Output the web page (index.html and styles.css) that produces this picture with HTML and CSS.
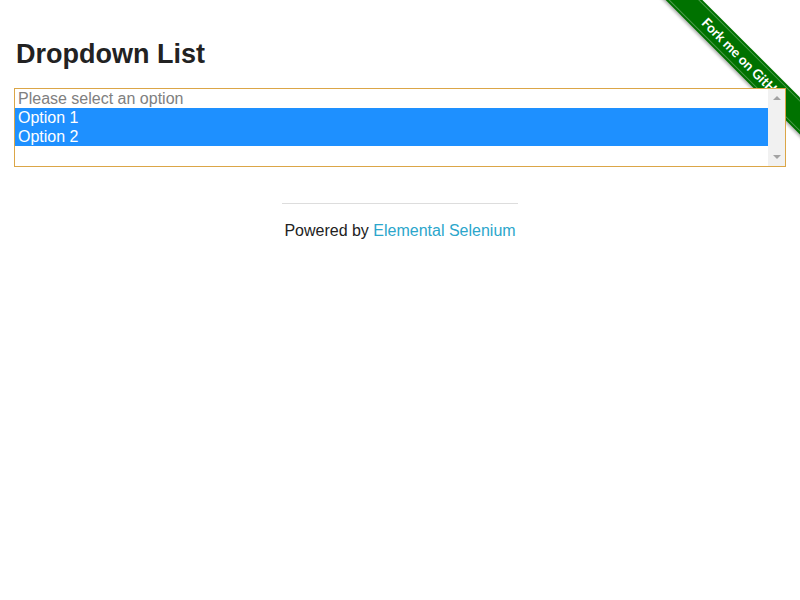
FILE: index.html
```html
<!DOCTYPE html>
<html>
<head>
<meta charset="utf-8">
<title>Dropdown List</title>
<link rel="stylesheet" href="styles.css">
</head>
<body>
<div class="ribbon-wrap">
  <a class="ribbon" href="#">Fork me on GitHub</a>
</div>
<div class="page">
  <h3 class="title">Dropdown List</h3>
  <div class="list" id="dropdown">
    <div class="options">
      <div class="option disabled">Please select an option</div>
      <div class="option selected">Option 1</div>
      <div class="option selected">Option 2</div>
    </div>
    <div class="scrollbar">
      <span class="arrow up"></span>
      <span class="arrow down"></span>
    </div>
  </div>
</div>
<div class="footer">
  <hr class="rule">
  <div class="powered">Powered by <a href="#">Elemental Selenium</a></div>
</div>
</body>
</html>
```

FILE: styles.css
```css
html, body {
  margin: 0;
  padding: 0;
  background: #fff;
}
body {
  font-family: "Liberation Sans", Arial, sans-serif;
  color: #222;
}
.page {
  padding: 0 14px;
}
.title {
  margin: 39px 0 0 2px;
  font-size: 27px;
  line-height: 31px;
  font-weight: bold;
  color: #222;
}
.list {
  position: relative;
  margin-top: 18px;
  height: 77px;
  border: 1px solid #dba647;
  display: flex;
  background: #fff;
}
.options {
  flex: 1;
  display: flex;
  flex-direction: column;
}
.option {
  height: 19px;
  line-height: 19px;
  font-size: 16px;
  padding: 0 3px;
  color: #222;
  white-space: nowrap;
}
.option.disabled {
  color: #808080;
}
.option.selected {
  background: #1e90ff;
  color: #fff;
}
.scrollbar {
  width: 17px;
  background: #f1f1f1;
  display: flex;
  flex-direction: column;
  justify-content: space-between;
  align-items: center;
  padding: 7px 0 7px;
  box-sizing: border-box;
}
.arrow {
  width: 0;
  height: 0;
  border-left: 4px solid transparent;
  border-right: 4px solid transparent;
}
.arrow.up {
  border-bottom: 4px solid #a3a3a3;
}
.arrow.down {
  border-top: 4px solid #a3a3a3;
}
.footer {
  width: 236px;
  margin: 36px auto 0;
}
.rule {
  margin: 0;
  border: 0;
  border-top: 1px solid #dddddd;
  height: 0;
}
.powered {
  margin-top: 17px;
  text-align: center;
  font-size: 16px;
  line-height: 19px;
  white-space: nowrap;
  color: #222;
}
.powered a {
  color: #2ba6cb;
  text-decoration: none;
}
.ribbon-wrap {
  position: absolute;
  top: 0;
  right: 0;
  width: 149px;
  height: 149px;
  overflow: hidden;
}
.ribbon {
  position: absolute;
  left: 13px;
  top: -33px;
  width: 240px;
  height: 26px;
  line-height: 26px;
  transform-origin: 0 13px;
  transform: rotate(45deg);
  background: #007200;
  box-shadow: 1px 2px 3px rgba(0,0,0,0.3);
  color: #fff;
  font-family: Lato, "Open Sans", sans-serif;
  font-weight: bold;
  font-size: 13.5px;
  text-decoration: none;
  padding-left: 57px;
  box-sizing: border-box;
  white-space: nowrap;
}
.ribbon::before,
.ribbon::after {
  content: "";
  position: absolute;
  left: 0;
  right: 0;
  height: 1px;
  background: rgba(255,255,255,0.3);
}
.ribbon::before {
  top: 2px;
}
.ribbon::after {
  bottom: 2px;
}
```
